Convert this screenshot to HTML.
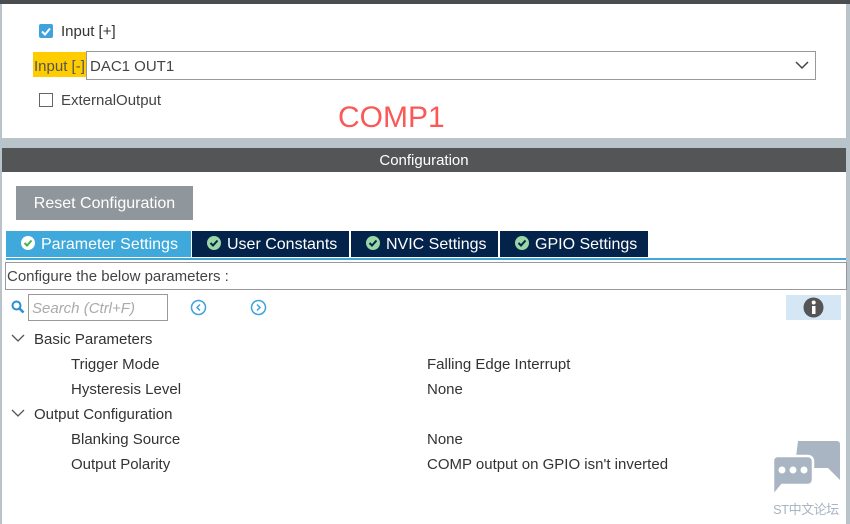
<!DOCTYPE html>
<html><head><meta charset="utf-8"><style>
body{margin:0;width:850px;height:524px;background:#b9c3ca;position:relative;overflow:hidden;font-family:"Liberation Sans","Noto Sans CJK SC",sans-serif;color:#333;font-size:15px}
.a{position:absolute}
.ic{display:inline-block;width:14px;height:14px;border-radius:50%;vertical-align:-1px;margin-right:6px;position:relative}
.ic svg{position:absolute;left:0;top:0}
</style></head><body>
<div class="a" style="left:0;top:0;width:850px;height:4px;background:#4a4d4f"></div>
<div class="a" style="left:2px;top:4px;width:844px;height:134px;background:#fff"></div>
<div class="a" style="left:39px;top:24px;width:14px;height:14px;background:#3fa2dc;border-radius:2px"><svg width="14" height="14"><path d="M3 7.5l3 3 5-6" stroke="#fff" stroke-width="2" fill="none"/></svg></div>
<div class="a" style="left:61px;top:23px">Input [+]</div>
<div class="a" style="left:33px;top:52px;width:53px;height:25px;background:#ffcc00"></div>
<div class="a" style="left:34px;top:58px;color:#555">Input [-]</div>
<div class="a" style="left:86px;top:51px;width:728px;height:27px;border:1px solid #999;background:#fff"></div>
<div class="a" style="left:90px;top:58px;color:#444">DAC1 OUT1</div>
<svg class="a" style="left:795px;top:60px" width="14" height="10"><path d="M1 2l6 6 6-6" stroke="#444" stroke-width="1.5" fill="none"/></svg>
<div class="a" style="left:39px;top:93px;width:12px;height:12px;border:1.5px solid #666;background:#fff"></div>
<div class="a" style="left:61px;top:92px;color:#444">ExternalOutput</div>
<div class="a" style="left:338px;top:101px;color:#fb5858;font-size:30px;font-family:'Liberation Sans',sans-serif">COMP1</div>
<div class="a" style="left:2px;top:148px;width:844px;height:24px;background:#535556;color:#fff;text-align:center;line-height:25px;font-size:15px">Configuration</div>
<div class="a" style="left:2px;top:172px;width:844px;height:352px;background:#fff"></div>
<div class="a" style="left:16px;top:186px;width:177px;height:34px;background:#8f969c;color:#fff;text-align:center;line-height:35px;font-size:16px">Reset Configuration</div>
<div class="a" style="left:6px;top:231px;width:185px;height:26px;background:#3fa9dc"></div>
<div class="a" style="left:192px;top:231px;width:157px;height:26px;background:#03234b"></div>
<div class="a" style="left:351px;top:231px;width:147px;height:26px;background:#03234b"></div>
<div class="a" style="left:500px;top:231px;width:148px;height:26px;background:#03234b"></div>
<div class="a" style="left:6px;top:258px;width:840px;height:2px;background:#3fa9dc"></div>
<div class="a" style="left:21px;top:236px;color:#fff;font-size:16px;white-space:nowrap"><span class="ic" style="background:#fff"><svg width="14" height="14"><path d="M3.5 7l2.5 2.5 4.5-5" stroke="#4caf50" stroke-width="2" fill="none"/></svg></span>Parameter Settings</div>
<div class="a" style="left:207px;top:236px;color:#fff;font-size:16px;white-space:nowrap"><span class="ic" style="background:#9ad7a4"><svg width="14" height="14"><path d="M3.5 7l2.5 2.5 4.5-5" stroke="#03234b" stroke-width="2" fill="none"/></svg></span>User Constants</div>
<div class="a" style="left:366px;top:236px;color:#fff;font-size:16px;white-space:nowrap"><span class="ic" style="background:#9ad7a4"><svg width="14" height="14"><path d="M3.5 7l2.5 2.5 4.5-5" stroke="#03234b" stroke-width="2" fill="none"/></svg></span>NVIC Settings</div>
<div class="a" style="left:515px;top:236px;color:#fff;font-size:16px;white-space:nowrap"><span class="ic" style="background:#9ad7a4"><svg width="14" height="14"><path d="M3.5 7l2.5 2.5 4.5-5" stroke="#03234b" stroke-width="2" fill="none"/></svg></span>GPIO Settings</div>
<div class="a" style="left:5px;top:262px;width:840px;height:26px;border:1px solid #999"></div>
<div class="a" style="left:7px;top:268px;color:#444">Configure the below parameters :</div>
<svg class="a" style="left:11px;top:300px" width="14" height="14"><circle cx="5.5" cy="5.5" r="4" stroke="#2a8fd0" stroke-width="2" fill="none"/><path d="M8.5 8.5l4 4" stroke="#2a8fd0" stroke-width="2.5"/></svg>
<div class="a" style="left:28px;top:294px;width:138px;height:25px;border:1px solid #999"></div>
<div class="a" style="left:32px;top:300px;color:#aaa;font-style:italic">Search (Ctrl+F)</div>
<svg class="a" style="left:190px;top:299px" width="17" height="17"><circle cx="8.5" cy="8.5" r="7" stroke="#3fa2dc" stroke-width="1.5" fill="none"/><path d="M10 5.5l-3 3 3 3" stroke="#3fa2dc" stroke-width="1.5" fill="none"/></svg>
<svg class="a" style="left:250px;top:299px" width="17" height="17"><circle cx="8.5" cy="8.5" r="7" stroke="#3fa2dc" stroke-width="1.5" fill="none"/><path d="M7 5.5l3 3-3 3" stroke="#3fa2dc" stroke-width="1.5" fill="none"/></svg>
<div class="a" style="left:786px;top:295px;width:55px;height:25px;background:#d5e7f5"></div>
<svg class="a" style="left:803px;top:297px" width="21" height="21"><circle cx="10.5" cy="10.5" r="10" fill="#555"/><rect x="9" y="9" width="3.5" height="8" fill="#fff"/><circle cx="10.7" cy="5.5" r="2" fill="#fff"/></svg>
<svg class="a" style="left:11px;top:333px" width="14" height="10"><path d="M1 2l6 6 6-6" stroke="#555" stroke-width="1.3" fill="none"/></svg>
<div class="a" style="left:34px;top:331px">Basic Parameters</div>
<div class="a" style="left:71px;top:356px">Trigger Mode</div>
<div class="a" style="left:427px;top:356px">Falling Edge Interrupt</div>
<div class="a" style="left:71px;top:381px">Hysteresis Level</div>
<div class="a" style="left:427px;top:381px">None</div>
<svg class="a" style="left:11px;top:408px" width="14" height="10"><path d="M1 2l6 6 6-6" stroke="#555" stroke-width="1.3" fill="none"/></svg>
<div class="a" style="left:34px;top:406px">Output Configuration</div>
<div class="a" style="left:71px;top:431px">Blanking Source</div>
<div class="a" style="left:427px;top:431px">None</div>
<div class="a" style="left:71px;top:456px">Output Polarity</div>
<div class="a" style="left:427px;top:456px">COMP output on GPIO isn't inverted</div>
<svg class="a" style="left:768px;top:438px" width="78" height="62"><path d="M30 3h39a3 3 0 0 1 3 3v36l-12-12h-30a3 3 0 0 1-3-3z" fill="#a9b5c2"/><path d="M6 18h34a5 5 0 0 1 5 5v19a5 5 0 0 1-5 5h-26l-9 11v-36a5 5 0 0 1 4-4z" fill="#a9b5c2" stroke="#fff" stroke-width="2.5"/><circle cx="14" cy="32" r="3.5" fill="#fff"/><circle cx="25" cy="32" r="3.5" fill="#fff"/><circle cx="36" cy="32" r="3.5" fill="#fff"/></svg>
<div class="a" style="left:773px;top:499px;color:#a9b5c2;font-size:13px;letter-spacing:-0.5px">ST中文论坛</div>
</body></html>
